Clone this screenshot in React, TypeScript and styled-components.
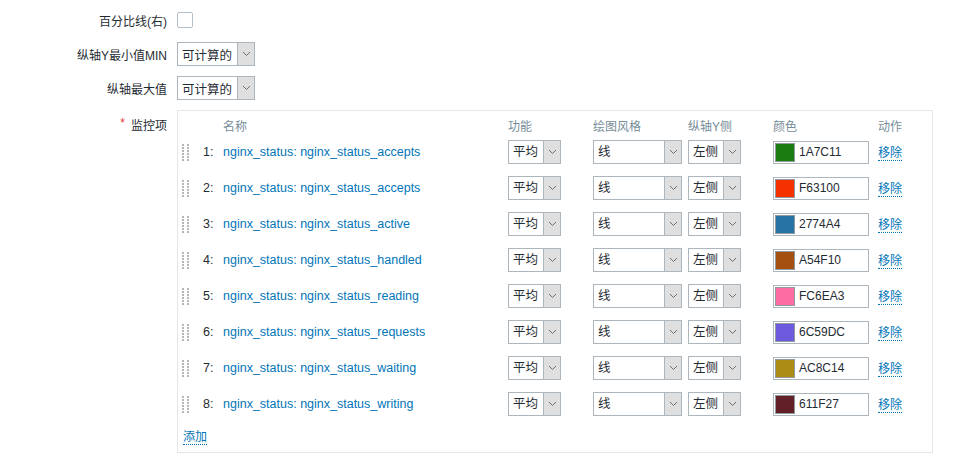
import styled, { createGlobalStyle } from 'styled-components';

const items = [
  { name: 'nginx_status_accepts', color: '1A7C11' },
  { name: 'nginx_status_accepts', color: 'F63100' },
  { name: 'nginx_status_active', color: '2774A4' },
  { name: 'nginx_status_handled', color: 'A54F10' },
  { name: 'nginx_status_reading', color: 'FC6EA3' },
  { name: 'nginx_status_requests', color: '6C59DC' },
  { name: 'nginx_status_waiting', color: 'AC8C14' },
  { name: 'nginx_status_writing', color: '611F27' },
];

const GlobalStyle = createGlobalStyle`
  body {
    margin: 0;
    background: #fff;
    color: #1f2c33;
    font-family: "Liberation Sans", Arial, "Noto Sans CJK SC", sans-serif;
    font-size: 12px;
  }
`;

function Chevron() {
  return (
    <svg width='9' height='6' viewBox='0 0 9 6'>
      <polyline points='1,1 4.5,4.5 8,1' fill='none' stroke='#6d6d6d' strokeWidth='1' />
    </svg>
  );
}

function Grip() {
  const dots = [];
  for (let r = 0; r < 6; r++) {
    dots.push(<rect key={'a' + r} x='0' y={r * 3} width='2' height='2' fill='#b4b8bb' />);
    dots.push(<rect key={'b' + r} x='5' y={r * 3} width='2' height='2' fill='#b4b8bb' />);
  }
  return (
    <svg width='7' height='17' viewBox='0 0 7 17'>
      {dots}
    </svg>
  );
}

function Select({ value, width }: { value: string; width: number }) {
  return (
    <SelectBox $width={width}>
      <SelectValue>{value}</SelectValue>
      <SelectButton>
        <Chevron />
      </SelectButton>
    </SelectBox>
  );
}

function App() {
  return (
    <>
      <GlobalStyle />
      <Form>
        <Label>百分比线(右)</Label>
        <Field>
          <Checkbox />
        </Field>

        <Label>纵轴Y最小值MIN</Label>
        <Field>
          <Select value='可计算的' width={78} />
        </Field>

        <Label>纵轴最大值</Label>
        <Field>
          <Select value='可计算的' width={78} />
        </Field>

        <Label $top>
          <Asterisk>*</Asterisk>监控项
        </Label>
        <ListBox>
          <ListRow $header>
            <span />
            <span />
            <span>名称</span>
            <span>功能</span>
            <span>绘图风格</span>
            <span>纵轴Y侧</span>
            <span>颜色</span>
            <span>动作</span>
          </ListRow>
          {items.map((item, i) => (
            <ListRow key={i}>
              <Grip />
              <RowText>{i + 1}:</RowText>
              <ItemLink>nginx_status: {item.name}</ItemLink>
              <Select value='平均' width={53} />
              <Select value='线' width={89} />
              <Select value='左侧' width={53} />
              <ColorInput>
                <Swatch style={{ background: '#' + item.color }} />
                {item.color}
              </ColorInput>
              <span>
                <DottedLink>移除</DottedLink>
              </span>
            </ListRow>
          ))}
          <AddRow>
            <DottedLink>添加</DottedLink>
          </AddRow>
        </ListBox>
      </Form>
    </>
  );
}

const Form = styled.div`
  display: grid;
  grid-template-columns: 167px 756px;
  column-gap: 10px;
  row-gap: 10px;
  padding-top: 8px;
`;

const Label = styled.div<{ $top?: boolean }>`
  display: flex;
  justify-content: flex-end;
  align-items: ${(p) => (p.$top ? 'flex-start' : 'center')};
  padding-top: ${(p) => (p.$top ? '6px' : '0')};
  height: ${(p) => (p.$top ? 'auto' : '24px')};
  white-space: nowrap;
`;

const Asterisk = styled.span`
  color: #e33734;
  margin-right: 6px;
`;

const Field = styled.div`
  display: flex;
  align-items: center;
  height: 24px;
`;

const Checkbox = styled.span`
  width: 16px;
  height: 16px;
  box-sizing: border-box;
  border: 1px solid #b3c0c7;
  border-radius: 2px;
  background: #fff;
`;

const SelectBox = styled.div<{ $width: number }>`
  display: inline-flex;
  width: ${(p) => p.$width}px;
  height: 24px;
  box-sizing: border-box;
  border: 1px solid #acb6bc;
  background: #fff;
`;

const SelectValue = styled.span`
  flex: 1;
  display: flex;
  align-items: center;
  padding-left: 4px;
  white-space: nowrap;
  overflow: hidden;
  font-size: 12.5px;
`;

const SelectButton = styled.span`
  width: 16px;
  display: flex;
  align-items: center;
  justify-content: center;
  background: #dfdfdf;
  border-left: 1px solid #acb6bc;
`;

const ListBox = styled.div`
  box-sizing: border-box;
  width: 756px;
  height: 343px;
  border: 1px solid #e4e6e8;
  padding: 0 4px;
`;

const ListRow = styled.div<{ $header?: boolean }>`
  display: grid;
  grid-template-columns: 21px 20px 285px 85px 95px 85px 105px 1fr;
  align-items: ${(p) => (p.$header ? 'end' : 'center')};
  height: ${(p) => (p.$header ? '23px' : '36px')};
  color: ${(p) => (p.$header ? '#768d99' : '#1f2c33')};
  line-height: 14px;
`;

const RowText = styled.span`
  font-size: 12.5px;
`;

const ItemLink = styled.span`
  color: #0275b8;
  white-space: nowrap;
  font-size: 12.5px;
`;

const ColorInput = styled.div`
  display: flex;
  align-items: center;
  gap: 4px;
  width: 96px;
  height: 23px;
  box-sizing: border-box;
  border: 1px solid #acb6bc;
  padding-left: 1px;
  background: #fff;
`;

const Swatch = styled.span`
  width: 20px;
  height: 19px;
  box-sizing: border-box;
  border: 1px solid #8f9aa0;
`;

const DottedLink = styled.span`
  display: inline-block;
  margin-top: 2px;
  color: #0275b8;
  border-bottom: 1px dotted #0275b8;
`;

const AddRow = styled.div`
  height: 26px;
  display: flex;
  align-items: center;
  padding-left: 1px;
`;

export default App;
